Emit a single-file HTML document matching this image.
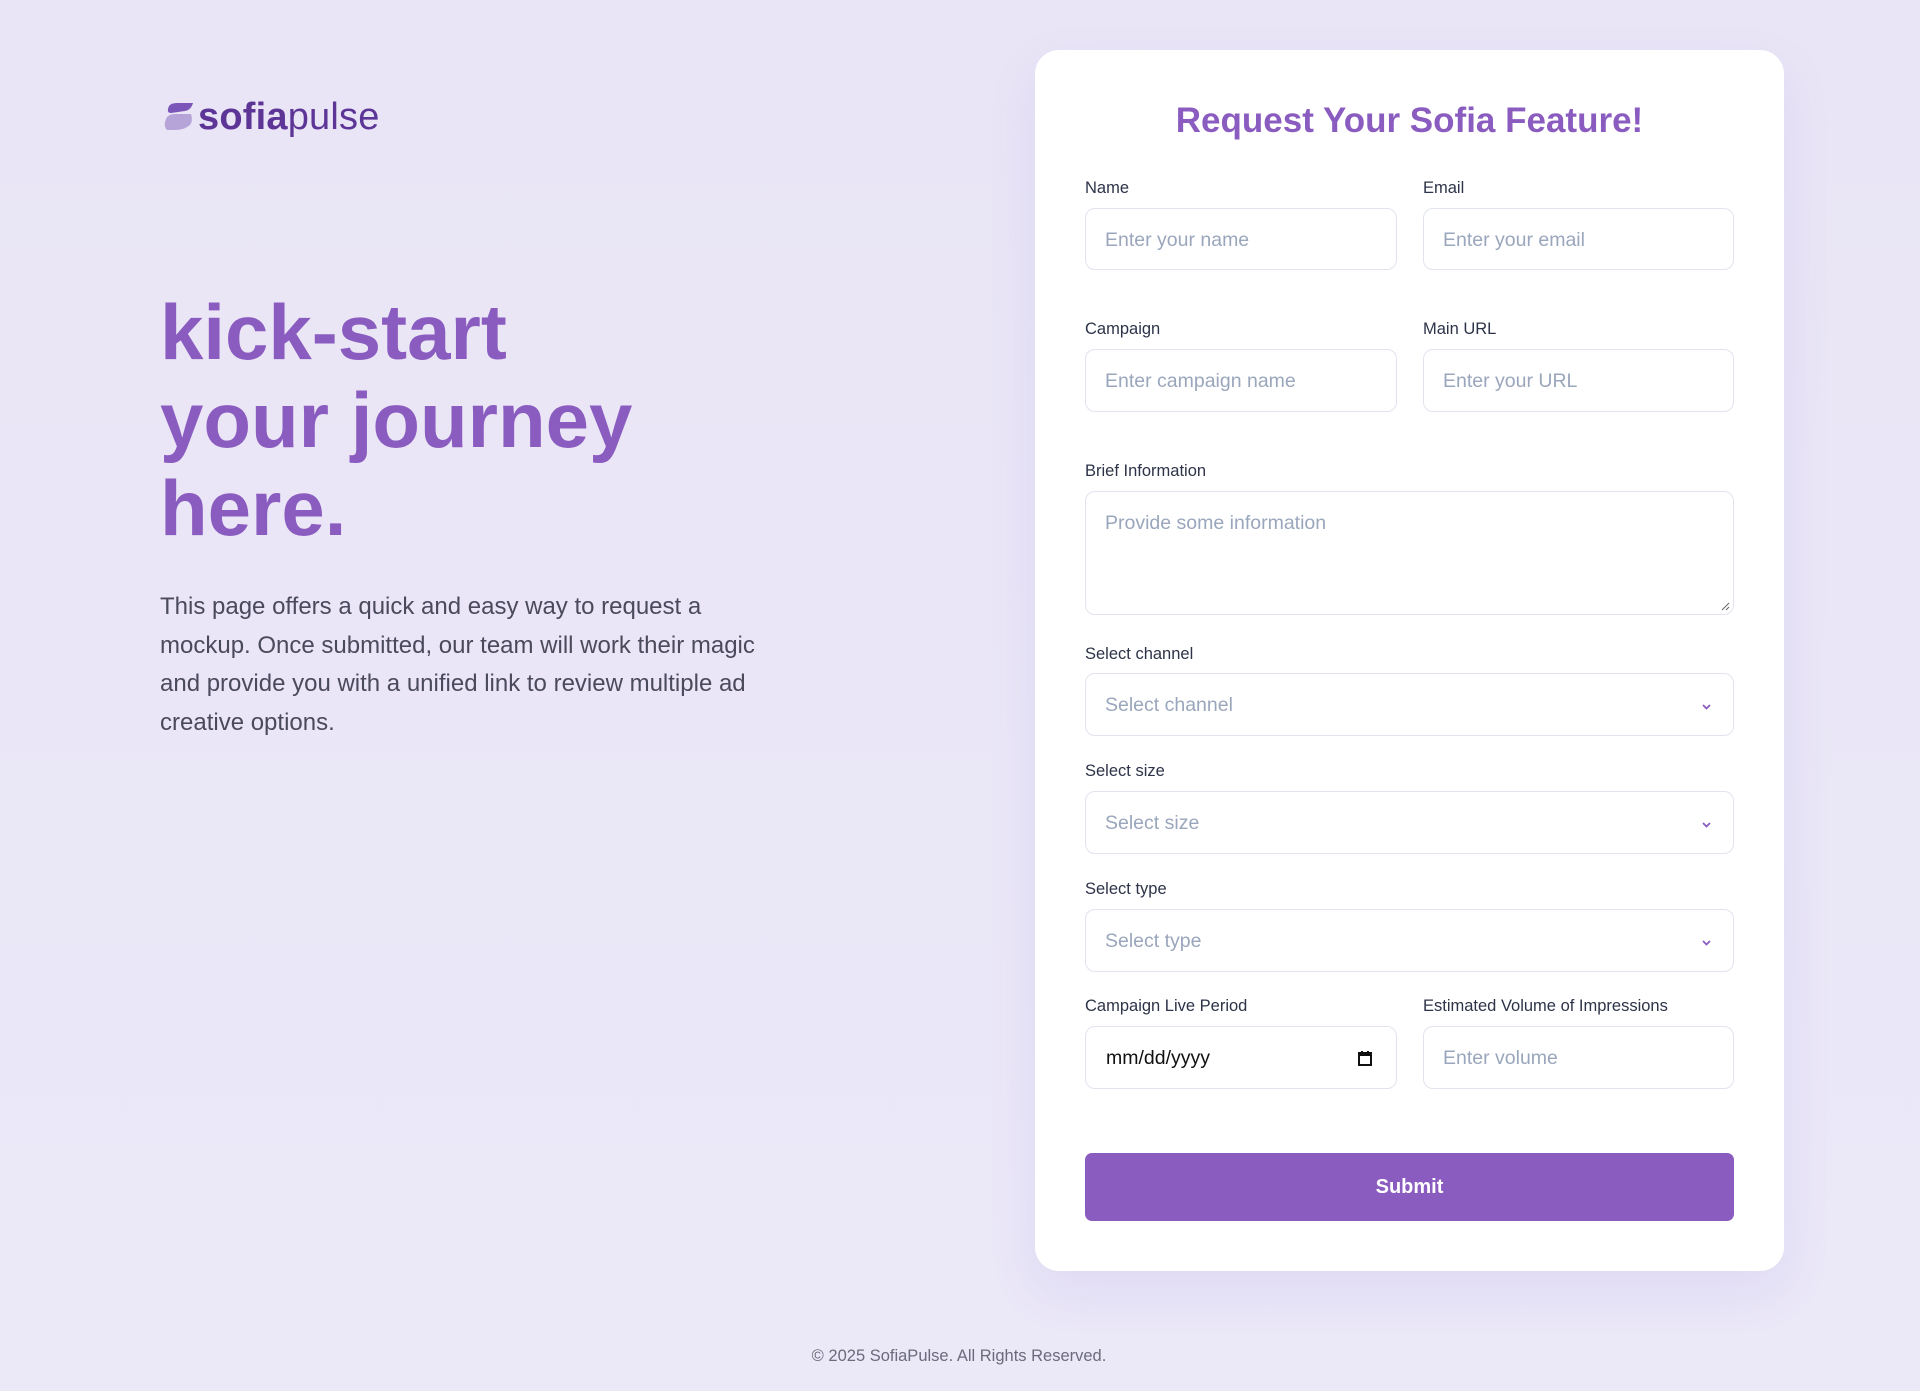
<!DOCTYPE html>
<html><head><meta charset="utf-8"><style>
*{box-sizing:border-box;margin:0;padding:0}
body{width:1920px;height:1391px;background:linear-gradient(180deg,#e9e5f6 0%,#ebe8f8 100%);font-family:"Liberation Sans","DejaVu Sans",sans-serif;position:relative;overflow:hidden}
.a{position:absolute}
.logo{left:163px;top:92px;height:50px;display:flex;align-items:center}
.logo span{font-size:38px;color:#5c3596;letter-spacing:0.2px}
h1{position:absolute;left:160px;top:288px;font-size:78px;line-height:88px;color:#8b5cc0;font-weight:bold;letter-spacing:0}
.p{left:160px;top:588px;font-size:24px;line-height:38.5px;color:#4b4a5c;white-space:nowrap}
.card{left:1035px;top:50px;width:749px;height:1221px;background:#fff;border-radius:24px;box-shadow:0 20px 50px rgba(120,90,200,0.10)}
.title{left:1035px;width:749px;top:101px;text-align:center;font-size:35px;font-weight:bold;color:#8b5cc0}
.l{font-size:16.5px;color:#2d3348;margin-top:1px}
.f{border:1.5px solid #e1e4ef;border-radius:10px;background:#fff;font-size:19.5px;color:#9aa6bc;padding-left:19px;display:flex;align-items:center;padding-top:2px}
.chev{position:absolute;right:22px;top:50%;margin-top:-1px;width:9px;height:6px}
.btn{left:1085px;top:1153px;width:649px;height:68px;background:#8b5cc0;border-radius:7px;color:#fff;font-weight:bold;font-size:20px;display:flex;align-items:center;justify-content:center}
.foot{left:0;width:1918px;top:1347px;text-align:center;font-size:16.5px;color:#6b6b7b}
</style></head><body>
<div class="a logo"><svg width="32" height="30" viewBox="0 0 32 30"><path d="M6 4 Q8 1 14 1 L30 1 Q28 8 22 9 L8 11 Q3 11 6 4Z" fill="#7b56b8"/><path d="M3 17 Q5 12 12 12 L28 12 Q31 22 24 25 Q20 28 10 28 L4 28 Q0 24 3 17Z" fill="#b6a3d8"/></svg><span style="margin-left:3px"><b>sofia</b>pulse</span></div>
<h1>kick-start<br>your journey<br>here.</h1>
<div class="a p">This page offers a quick and easy way to request a<br>mockup. Once submitted, our team will work their magic<br>and provide you with a unified link to review multiple ad<br>creative options.</div>
<div class="a card"></div>
<div class="a title">Request Your Sofia Feature!</div>

<div class="a l" style="left:1085px;top:178px">Name</div>
<div class="a l" style="left:1423px;top:178px">Email</div>
<div class="a f" style="left:1085px;top:208px;width:312px;height:62px">Enter your name</div>
<div class="a f" style="left:1423px;top:208px;width:311px;height:62px">Enter your email</div>

<div class="a l" style="left:1085px;top:319px">Campaign</div>
<div class="a l" style="left:1423px;top:319px">Main URL</div>
<div class="a f" style="left:1085px;top:349px;width:312px;height:63px">Enter campaign name</div>
<div class="a f" style="left:1423px;top:349px;width:311px;height:63px">Enter your URL</div>

<div class="a l" style="left:1085px;top:461px">Brief Information</div>
<div class="a f" style="left:1085px;top:491px;width:649px;height:124px;align-items:flex-start;padding-top:20px">Provide some information
<svg style="position:absolute;right:3px;bottom:3px" width="9" height="9"><path d="M1 8 L8 1 M5 8 L8 5" stroke="#666" stroke-width="1"/></svg></div>

<div class="a l" style="left:1085px;top:644px">Select channel</div>
<div class="a f" style="left:1085px;top:673px;width:649px;height:63px">Select channel<svg class="chev" viewBox="0 0 9 6"><path d="M1 1 L4.5 4.5 L8 1" stroke="#8b5cc0" stroke-width="1.8" fill="none"/></svg></div>

<div class="a l" style="left:1085px;top:761px">Select size</div>
<div class="a f" style="left:1085px;top:791px;width:649px;height:63px">Select size<svg class="chev" viewBox="0 0 9 6"><path d="M1 1 L4.5 4.5 L8 1" stroke="#8b5cc0" stroke-width="1.8" fill="none"/></svg></div>

<div class="a l" style="left:1085px;top:879px">Select type</div>
<div class="a f" style="left:1085px;top:909px;width:649px;height:63px">Select type<svg class="chev" viewBox="0 0 9 6"><path d="M1 1 L4.5 4.5 L8 1" stroke="#8b5cc0" stroke-width="1.8" fill="none"/></svg></div>

<div class="a l" style="left:1085px;top:996px">Campaign Live Period</div>
<div class="a l" style="left:1423px;top:996px">Estimated Volume of Impressions</div>
<div class="a f" style="left:1085px;top:1026px;width:312px;height:63px;color:#111;padding-left:20px">mm/dd/yyyy
<svg style="position:absolute;right:24px;top:23px" width="14" height="16" viewBox="0 0 14 16"><rect x="1" y="3" width="12" height="12" fill="none" stroke="#111" stroke-width="2"/><rect x="1" y="3" width="12" height="3" fill="#111"/><path d="M4 1v3M10 1v3" stroke="#111" stroke-width="2"/></svg></div>
<div class="a f" style="left:1423px;top:1026px;width:311px;height:63px">Enter volume</div>

<div class="a btn">Submit</div>
<div class="a foot">© 2025 SofiaPulse. All Rights Reserved.</div>
</body></html>
